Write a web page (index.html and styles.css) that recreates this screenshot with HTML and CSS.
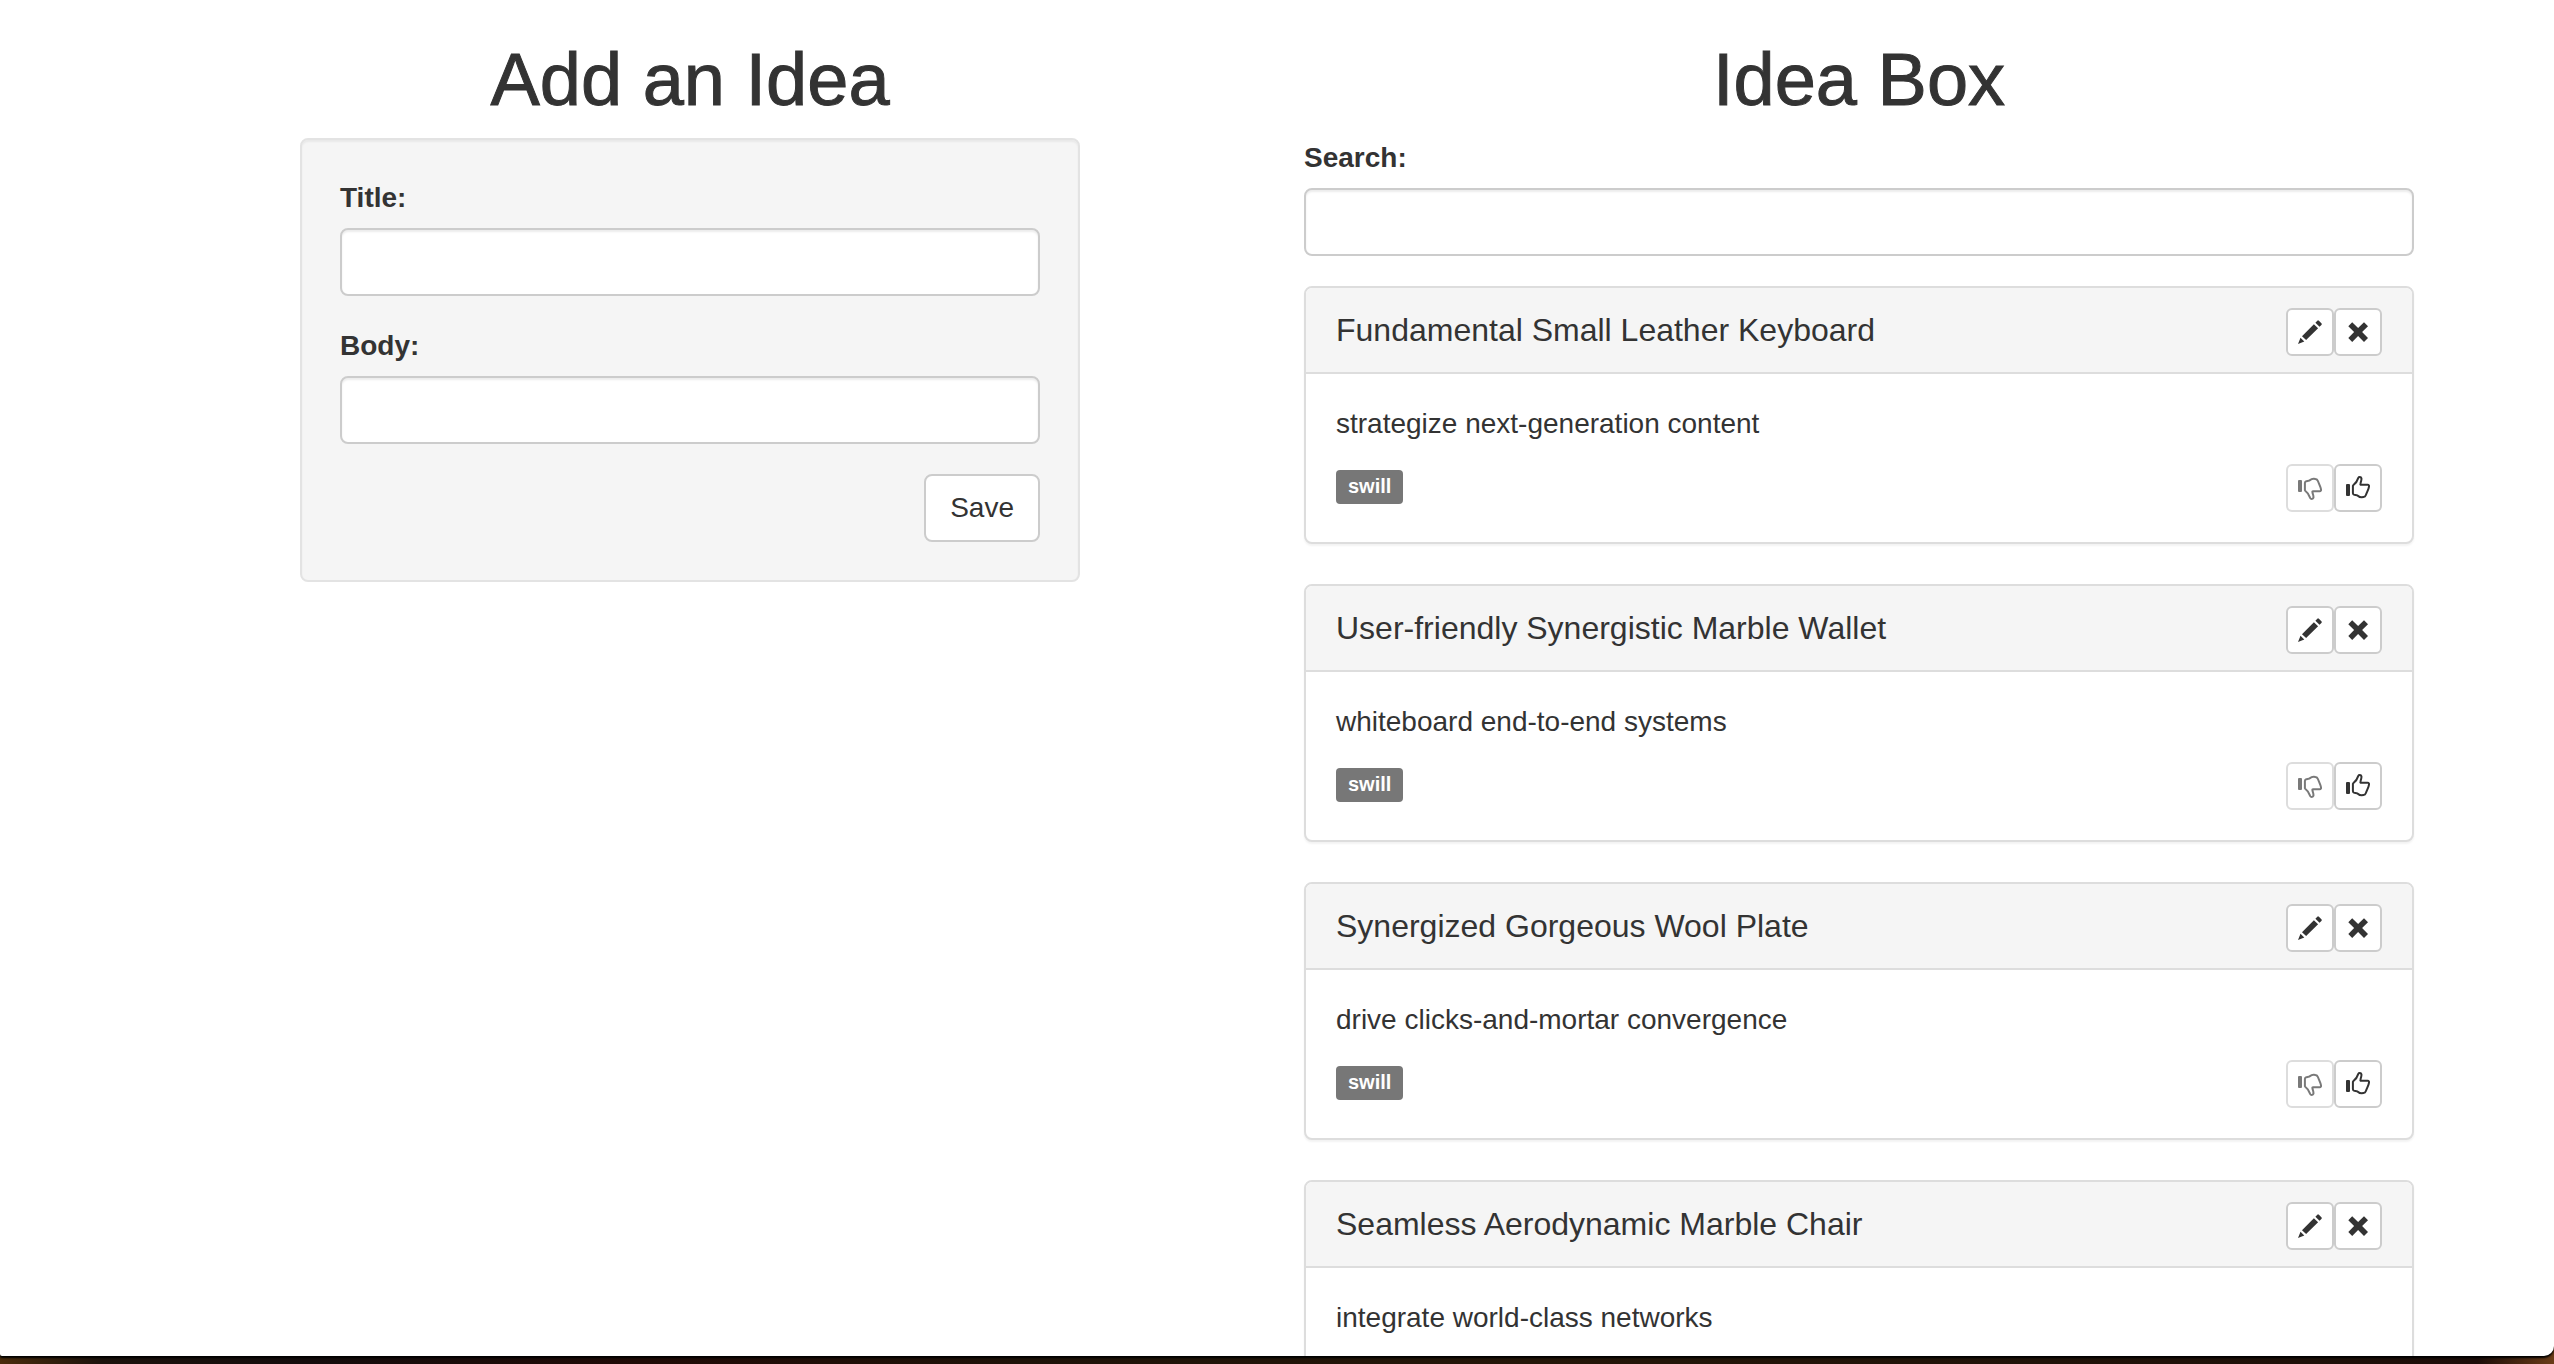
FILE: index.html
```html
<!DOCTYPE html>
<html lang="en">
<head>
<meta charset="utf-8">
<title>Idea Box</title>
<link rel="stylesheet" href="styles.css">
</head>
<body>
<svg class="sprite" aria-hidden="true">
  <symbol id="icon-pencil" viewBox="0 0 24 24">
    <path fill="currentColor" d="M0 24L2.5 17.8L6.3 21.6ZM4 16.2L15.9 4.2L20.1 8.2L8.1 20.1ZM17.4 2.7L19.3.7Q20.1 0 20.9.8L23.4 3.3Q24.2 4.1 23.4 4.9L21.5 6.8Z"/>
  </symbol>
  <symbol id="icon-remove" viewBox="0 0 24 24">
    <path fill="currentColor" d="M6.2 2.3L12.1 8.1L18 2.3L22 6.2L16.1 12.1L22 18L18 22L12.1 16.1L6.2 22L2.3 18L8.1 12.1L2.3 6.2Z"/>
  </symbol>
  <symbol id="icon-thumbs-up" viewBox="0 0 24 24">
    <rect x="0" y="8" width="4" height="12" rx="1" fill="currentColor"/>
    <path fill="none" stroke="currentColor" stroke-width="2" stroke-linejoin="round" d="M7.2 9.3C9 8 11.2 5.5 12.3 1.9C12.8.7 15 .7 15.4 2.2C15.8 3.8 14.8 5.5 14.4 8C14.3 8.5 14.5 8.7 15 8.7H21.6Q23.3 8.9 23 10.6C22.8 13 21 16 19.9 19Q19.2 20.9 17.5 21.1C15.6 21.4 13.4 21.3 12.2 20C11.2 18.9 9.2 19.1 7.9 18.6Q6.9 18.1 6.9 17V10Z"/>
  </symbol>
  <symbol id="icon-thumbs-down" viewBox="0 0 24 24">
    <g transform="matrix(1 0 0 -1 0 24)">
      <rect x="0" y="8" width="4" height="12" rx="1" fill="currentColor"/>
      <path fill="none" stroke="currentColor" stroke-width="2" stroke-linejoin="round" d="M7.2 9.3C9 8 11.2 5.5 12.3 1.9C12.8.7 15 .7 15.4 2.2C15.8 3.8 14.8 5.5 14.4 8C14.3 8.5 14.5 8.7 15 8.7H21.6Q23.3 8.9 23 10.6C22.8 13 21 16 19.9 19Q19.2 20.9 17.5 21.1C15.6 21.4 13.4 21.3 12.2 20C11.2 18.9 9.2 19.1 7.9 18.6Q6.9 18.1 6.9 17V10Z"/>
    </g>
  </symbol>
</svg>
<main class="page">
  <section class="column">
    <h1 class="heading">Add an Idea</h1>
    <form class="well">
      <div class="field">
        <label class="field-label" for="title">Title:</label>
        <input class="field-input" id="title" type="text">
      </div>
      <div class="field">
        <label class="field-label" for="body">Body:</label>
        <input class="field-input" id="body" type="text">
      </div>
      <button class="save" type="button">Save</button>
    </form>
  </section>
  <section class="column">
    <h1 class="heading">Idea Box</h1>
    <div class="field">
      <label class="field-label" for="search">Search:</label>
      <input class="field-input" id="search" type="text">
    </div>
    <article class="idea">
      <header class="idea-header">
        <h3 class="idea-title">Fundamental Small Leather Keyboard</h3>
        <div class="actions">
          <button class="icon-button" type="button" aria-label="Edit"><svg class="icon"><use href="#icon-pencil"/></svg></button>
          <button class="icon-button" type="button" aria-label="Delete"><svg class="icon"><use href="#icon-remove"/></svg></button>
        </div>
      </header>
      <div class="idea-content">
        <p class="idea-text">strategize next-generation content</p>
        <div class="idea-footer">
          <span class="quality">swill</span>
          <div class="actions">
            <button class="icon-button" type="button" aria-label="Thumbs down" disabled><svg class="icon"><use href="#icon-thumbs-down"/></svg></button>
            <button class="icon-button" type="button" aria-label="Thumbs up"><svg class="icon"><use href="#icon-thumbs-up"/></svg></button>
          </div>
        </div>
      </div>
    </article>
    <article class="idea">
      <header class="idea-header">
        <h3 class="idea-title">User-friendly Synergistic Marble Wallet</h3>
        <div class="actions">
          <button class="icon-button" type="button" aria-label="Edit"><svg class="icon"><use href="#icon-pencil"/></svg></button>
          <button class="icon-button" type="button" aria-label="Delete"><svg class="icon"><use href="#icon-remove"/></svg></button>
        </div>
      </header>
      <div class="idea-content">
        <p class="idea-text">whiteboard end-to-end systems</p>
        <div class="idea-footer">
          <span class="quality">swill</span>
          <div class="actions">
            <button class="icon-button" type="button" aria-label="Thumbs down" disabled><svg class="icon"><use href="#icon-thumbs-down"/></svg></button>
            <button class="icon-button" type="button" aria-label="Thumbs up"><svg class="icon"><use href="#icon-thumbs-up"/></svg></button>
          </div>
        </div>
      </div>
    </article>
    <article class="idea">
      <header class="idea-header">
        <h3 class="idea-title">Synergized Gorgeous Wool Plate</h3>
        <div class="actions">
          <button class="icon-button" type="button" aria-label="Edit"><svg class="icon"><use href="#icon-pencil"/></svg></button>
          <button class="icon-button" type="button" aria-label="Delete"><svg class="icon"><use href="#icon-remove"/></svg></button>
        </div>
      </header>
      <div class="idea-content">
        <p class="idea-text">drive clicks-and-mortar convergence</p>
        <div class="idea-footer">
          <span class="quality">swill</span>
          <div class="actions">
            <button class="icon-button" type="button" aria-label="Thumbs down" disabled><svg class="icon"><use href="#icon-thumbs-down"/></svg></button>
            <button class="icon-button" type="button" aria-label="Thumbs up"><svg class="icon"><use href="#icon-thumbs-up"/></svg></button>
          </div>
        </div>
      </div>
    </article>
    <article class="idea">
      <header class="idea-header">
        <h3 class="idea-title">Seamless Aerodynamic Marble Chair</h3>
        <div class="actions">
          <button class="icon-button" type="button" aria-label="Edit"><svg class="icon"><use href="#icon-pencil"/></svg></button>
          <button class="icon-button" type="button" aria-label="Delete"><svg class="icon"><use href="#icon-remove"/></svg></button>
        </div>
      </header>
      <div class="idea-content">
        <p class="idea-text">integrate world-class networks</p>
      </div>
    </article>
  </section>
</main>
</body>
</html>
```
FILE: styles.css
```css
* {
  box-sizing: border-box;
}

body {
  display: flex;
  flex-direction: column;
  height: 100vh;
  margin: 0;
  padding-bottom: 8px;
  overflow: hidden;
  background: linear-gradient(90deg, #4a2c0c, #1c120c 4%, #140c0c 12%, #200a06 25%, #1e1208 40%, #241608 60%, #1e1008 90%, #1c0c08 97%, #6a3c18);
  color: #333;
  font: 28px/40px "Helvetica Neue", Helvetica, "Liberation Sans", Arial, sans-serif;
}

.sprite {
  display: none;
}

.page {
  display: grid;
  flex: 1;
  grid-template-columns: 26fr 37fr;
  gap: 224px;
  min-height: 0;
  padding: 40px 140px 0 300px;
  overflow: hidden;
  border-radius: 0 0 10px 2px;
  background: #fff;
  box-shadow: 0 2px 2px #000;
}

.heading {
  margin: 0 0 18px;
  font-size: 74px;
  font-weight: 500;
  line-height: 80px;
  text-align: center;
  -webkit-text-stroke: 1px #333;
}

.well {
  display: flex;
  flex-direction: column;
  padding: 38px;
  border: 2px solid #e3e3e3;
  border-radius: 8px;
  background: #f5f5f5;
  box-shadow: inset 0 2px 2px rgba(0, 0, 0, .05);
}

.field {
  display: flex;
  flex-direction: column;
  gap: 10px;
  margin-bottom: 30px;
}

.field-label {
  font-weight: 700;
}

.field-input {
  width: 100%;
  height: 68px;
  padding: 12px 24px;
  border: 2px solid #ccc;
  border-radius: 8px;
  background: #fff;
  box-shadow: inset 0 2px 2px rgba(0, 0, 0, .075);
  color: #555;
  font: inherit;
}

.save {
  align-self: flex-end;
  padding: 12px 24px;
  border: 2px solid #ccc;
  border-radius: 8px;
  background: #fff;
  color: #333;
  font: inherit;
}

.idea {
  margin-bottom: 40px;
  border: 2px solid #ddd;
  border-radius: 8px;
  background: #fff;
  box-shadow: 0 2px 2px rgba(0, 0, 0, .05);
}

.idea-header {
  display: flex;
  align-items: flex-start;
  justify-content: space-between;
  padding: 20px 30px 16px;
  border-bottom: 2px solid #ddd;
  border-radius: 6px 6px 0 0;
  background: #f5f5f5;
}

.idea-title {
  margin: 0;
  font-size: 32px;
  font-weight: 400;
  line-height: 44px;
}

.idea-content {
  padding: 30px;
}

.idea-text {
  margin: 0 0 20px;
}

.idea-footer {
  display: flex;
  align-items: center;
  justify-content: space-between;
}

.quality {
  margin-bottom: 2px;
  padding: 4px 12px 6px;
  border-radius: 4px;
  background: #777;
  color: #fff;
  font-size: 20px;
  font-weight: 700;
  line-height: 24px;
}

.actions {
  display: flex;
}

.icon-button {
  display: flex;
  padding: 10px;
  border: 2px solid #ccc;
  border-radius: 6px;
  background: #fff;
  color: #333;
}

.icon-button:disabled {
  opacity: .65;
}

.icon {
  width: 24px;
  height: 24px;
}
```
